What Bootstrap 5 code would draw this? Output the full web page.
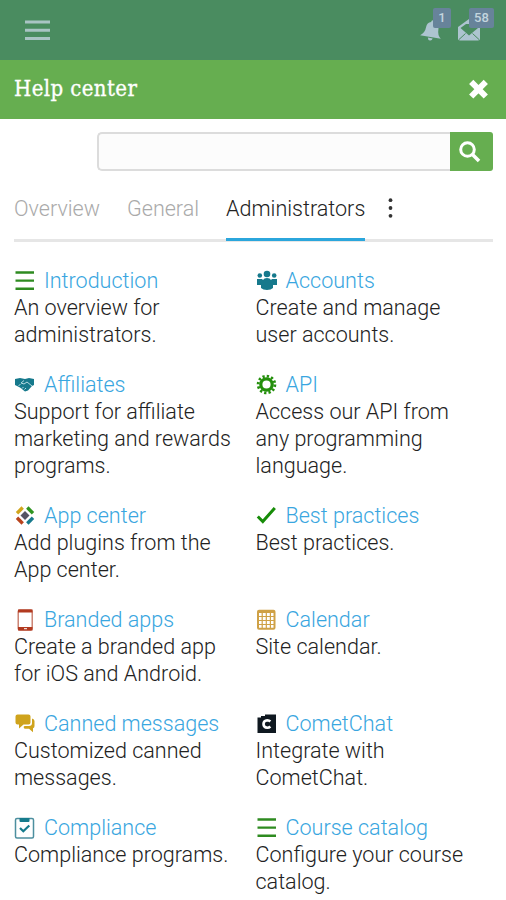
<!DOCTYPE html>
<html lang="en">
<head>
<meta charset="utf-8">
<meta name="viewport" content="width=device-width, initial-scale=1">
<title>Help center</title>
<link href="https://cdn.jsdelivr.net/npm/bootstrap@5.3.0/dist/css/bootstrap.min.css" rel="stylesheet">
<style>
body{font-family:Roboto,"Liberation Sans",sans-serif;font-weight:300;font-size:21.55px;line-height:27px;color:#222;background:#fff;overflow:hidden}
.topbar{height:60px;background:#4a8c60;padding:0 23px 0 25px}
.titlebar{height:59px;background:#66ae50;padding:0 17px 2px 14px}
.titlebar h1{font:400 22px/28px "DejaVu Serif Condensed","DejaVu Serif",serif;font-stretch:condensed;letter-spacing:.4px;color:#fff;-webkit-text-stroke:.3px #fff}
.alert-icons{gap:11px}
.alert-icon{position:relative;width:26px;height:26px}
.count{position:absolute;top:-9px;height:20px;line-height:19px;border-radius:2px;background:#67839a;color:#c3d5de;font-size:13px;font-weight:500;text-align:center}
.count-one{left:13px;width:18px}
.count-many{left:12px;width:25px}
.plain-btn{border:0;background:none;padding:0;display:flex}
.search{width:396px;height:39px;margin:13px 13px 0 auto}
.search .form-control{height:39px;background:#fcfcfc;border:2px solid #dcdcdc;border-right:0;border-radius:5px 0 0 5px}
.search .btn{width:43px;padding:0 4px 0 0;background:#66ae50;border:0;border-radius:0 3px 3px 0}
.tabs{height:51px;margin:20px 13px 0 14px;border-bottom:3px solid #e6e6e6}
.tabs .nav-link{padding:4px 0 0;height:50px;color:#aaa;line-height:27px}
.tabs .nav-link.active{color:#222;border-bottom:3px solid #2ba6dc}
.tab-overview{width:113px}
.tab-general{width:99px}
.more{margin:7px 0 0 23px}
.topics{margin:25px 8px 0 14px;display:grid;grid-template-columns:220px 220px;column-gap:21.500px;row-gap:23px}
.topics h2{font:inherit;color:#39a6e0;height:27px}
.topics p{margin:0}
.topics h2 svg{width:22px;height:22px;flex:none;margin-right:8px}
</style>
</head>
<body>
<header class="topbar d-flex align-items-center justify-content-between">
  <button class="plain-btn" aria-label="Menu"><svg width="25" height="22" viewBox="0 0 25 22" stroke="#a9c4c4" stroke-width="3"><path d="M0 3h25M0 11.2h25M0 19.4h25"/></svg></button>
  <div class="alert-icons d-flex align-items-start">
    <div class="alert-icon"><svg class="d-block" width="26" height="26" viewBox="0 0 26 26" fill="#adc4d0"><g transform="rotate(10 11 14)"><path d="M9.500 5q0-2 2-2t2 2q4.500 1 4.500 6 0 6 4 9H1q4.500-3 4.500-9 0-5 4-6z"/><path d="M9 21h5q-.5 2.500-2.500 2.500T9 21z"/></g></svg><span class="count count-one">1</span></div>
    <div class="alert-icon"><svg class="d-block" width="26" height="26" viewBox="0 0 26 26"><path fill="#adc4d0" d="M1 10 12 2l11 8v11.500q0 2-2 2H3q-2 0-2-2z"/><path fill="#4a8c60" d="M3.500 11 9 7h9l3 4-9 7.500z"/><path d="m2 22.500 6.500-6M22 22.500l-6.500-6" stroke="#4a8c60" fill="none"/></svg><span class="count count-many">58</span></div>
  </div>
</header>
<section class="titlebar d-flex align-items-center justify-content-between">
  <h1 class="m-0">Help center</h1>
  <button class="plain-btn" aria-label="Close"><svg width="21" height="20" viewBox="0 0 21 20" stroke="#fff" stroke-width="6"><path d="m3.200 2.900 14.600 14.600M17.800 2.900 3.200 17.500"/></svg></button>
</section>
<form class="search input-group flex-nowrap">
  <input class="form-control" type="text" aria-label="Search">
  <button class="btn d-flex align-items-center justify-content-center" type="button" aria-label="Search"><svg width="22" height="22" viewBox="0 0 22 22" fill="none" stroke="#fff"><circle cx="8.500" cy="8.500" r="6.800" stroke-width="3"/><path d="m13.500 13.500 6.500 6.500" stroke-width="3.600"/></svg></button>
</form>
<nav class="tabs nav flex-nowrap">
  <a class="nav-link tab-overview" href="#">Overview</a>
  <a class="nav-link tab-general" href="#">General</a>
  <a class="nav-link active" href="#">Administrators</a>
  <button class="plain-btn more" aria-label="More"><svg width="5" height="20" viewBox="0 0 5 20" fill="#333"><circle cx="2.500" cy="2.200" r="1.900"/><circle cx="2.500" cy="10" r="1.900"/><circle cx="2.500" cy="17.800" r="1.900"/></svg></button>
</nav>
<main class="topics">
  <article><h2 class="d-flex align-items-center m-0"><svg viewBox="0 0 22 22" stroke="#2e8b20" stroke-width="2.400"><path d="M1.500 2.500h18.500M1.500 10.600h18.500M1.500 18.700h18.500"/></svg>Introduction</h2><p>An overview for administrators.</p></article>
  <article><h2 class="d-flex align-items-center m-0"><svg viewBox="0 0 22 22" fill="#16798c"><circle cx="11" cy="4" r="3.300"/><circle cx="3.800" cy="5.500" r="2.300"/><circle cx="18.200" cy="5.500" r="2.300"/><path d="M1 9h5l1 1q1-2 4-2t4 2l1-1h5v6h-4v3q-2 2-6 2t-6-2v-3H1z"/></svg>Accounts</h2><p>Create and manage user accounts.</p></article>
  <article><h2 class="d-flex align-items-center m-0"><svg viewBox="0 0 22 22"><path fill="#16798c" d="m1 5 5-1 5 1 4-1 5 1v6l-2 1-4 4.500-3 1-5-4-3-1.500-2-1z"/><path d="M10 6.500 7 9l3 1 3-2 5 4M4.500 12l2-2M8 14.500l1.500-1.500M10.500 15.500l1.500-1.500" fill="none" stroke="#b5dbe2" stroke-width="1"/></svg>Affiliates</h2><p>Support for affiliate marketing and rewards programs.</p></article>
  <article><h2 class="d-flex align-items-center m-0"><svg viewBox="0 0 22 22" fill="none" stroke="#248f0c"><circle cx="10.500" cy="10.500" r="5.700" stroke-width="3.200"/><circle cx="10.500" cy="10.500" r="8.400" stroke-width="2.800" stroke-dasharray="2.300 2.098"/></svg>API</h2><p>Access our API from any programming language.</p></article>
  <article><h2 class="d-flex align-items-center m-0"><svg viewBox="0 0 22 22"><path fill="#555463" d="m11 6 4.500 4.500L11 15l-4.500-4.500z"/><g fill="none" stroke-width="3.400"><path stroke="#d1a51c" d="M3 8.200 8.700 2.500"/><path stroke="#2f9420" d="M13.300 2.500 19 8.200"/><path stroke="#b9431d" d="M3 12.800l5.700 5.700"/><path stroke="#16798c" d="M13.300 18.500 19 12.800"/></g></svg>App center</h2><p>Add plugins from the App center.</p></article>
  <article><h2 class="d-flex align-items-center m-0"><svg viewBox="0 0 22 22" fill="none" stroke="#178c08" stroke-width="3"><path d="m1.800 11.500 5 5L18.800 3"/></svg>Best practices</h2><p>Best practices.</p></article>
  <article><h2 class="d-flex align-items-center m-0"><svg viewBox="0 0 22 22"><rect x="4.200" y="1" width="14" height="20" rx="1.500" fill="none" stroke="#c4705e" stroke-width="1.300"/><path fill="#b23a20" d="M4 .5h14.500v3H4zM4 18h14.500v3.500H4z"/><path d="M10 19.700h3" stroke="#fff"/></svg>Branded apps</h2><p>Create a branded app for iOS and Android.</p></article>
  <article><h2 class="d-flex align-items-center m-0"><svg viewBox="0 0 22 22" fill="none" stroke="#cfa146"><rect x="2" y="1.700" width="16.500" height="18" rx="1" stroke-width="2"/><path d="M2 3h16.500" stroke-width="2"/><path d="M6.200 3v17M10.300 3v17M14.400 3v17M2 7.500h16M2 11.500h16M2 15.500h16" stroke-width="1.200"/></svg>Calendar</h2><p>Site calendar.</p></article>
  <article><h2 class="d-flex align-items-center m-0"><svg viewBox="0 0 22 22" fill="#cfa31c"><path d="M3.500 1.500h11q2 0 2 2v6q0 2-2 2H9.500L5 15.500v-4H3.500q-2 0-2-2v-6q0-2 2-2z"/><path d="M18 5.500q2.500.5 2.500 2.500v5q0 2-1.500 2.200v4L15 15.700h-4.500L9.500 14l1-1H15q3 0 3-3z"/></svg>Canned messages</h2><p>Customized canned messages.</p></article>
  <article><h2 class="d-flex align-items-center m-0"><svg viewBox="0 0 22 22"><path fill="#0f1820" d="M1.500 4.500H5V3h4v-1.500h11v18.500H1.500z"/><path d="M14.300 8.500q-1.200-1.300-3-1.300-3.800.3-3.800 3.800t3.800 3.800q1.800 0 3-1.300" fill="none" stroke="#fff" stroke-width="2.600"/></svg>CometChat</h2><p>Integrate with CometChat.</p></article>
  <article><h2 class="d-flex align-items-center m-0"><svg viewBox="0 0 22 22"><rect x="1.500" y="1.500" width="18" height="19.500" rx="1.500" fill="#fff" stroke="#4d8f9f" stroke-width="1.500"/><path fill="#167b8c" d="M5.500 1h10v3q0 1-1 1h-8q-1 0-1-1z"/><path d="m6 11 3.300 3.300 6-5.800" fill="none" stroke="#167b8c" stroke-width="2.200"/></svg>Compliance</h2><p>Compliance programs.</p></article>
  <article><h2 class="d-flex align-items-center m-0"><svg viewBox="0 0 22 22" stroke="#2e8b20" stroke-width="2.400"><path d="M1.500 2.500h18.500M1.500 10.600h18.500M1.500 18.700h18.500"/></svg>Course catalog</h2><p>Configure your course catalog.</p></article>
</main>
<script src="https://cdn.jsdelivr.net/npm/bootstrap@5.3.0/dist/js/bootstrap.bundle.min.js"></script>
</body>
</html>
